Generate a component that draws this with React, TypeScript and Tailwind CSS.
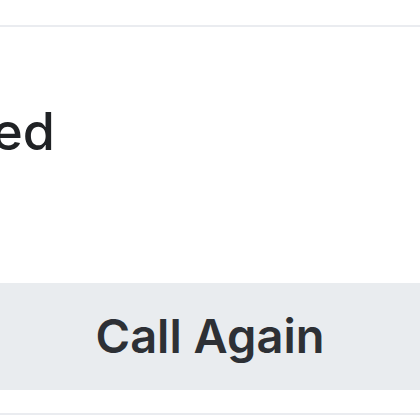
export default function App() {
  return (
    <div className="w-[420px] h-[420px] overflow-hidden bg-white font-['Inter','Liberation_Sans',sans-serif]">
      <div className="h-[25px]" />
      <div className="border-t-2 border-[#eaecf0]">
        <div className="h-[256px] pt-[70px]">
          <div className="w-[55px] flex justify-end">
            <h2 className="whitespace-nowrap text-[52px] leading-[70px] font-medium text-[#202225]">
              Call Ended
            </h2>
          </div>
        </div>
        <button className="w-full h-[107px] bg-[#e9ecef] flex items-center justify-center text-[47px] font-semibold text-[#2d3035]">
          Call Again
        </button>
        <div className="h-[23px]" />
        <div className="border-t-2 border-[#eaecf0]" />
      </div>
    </div>
  );
}
